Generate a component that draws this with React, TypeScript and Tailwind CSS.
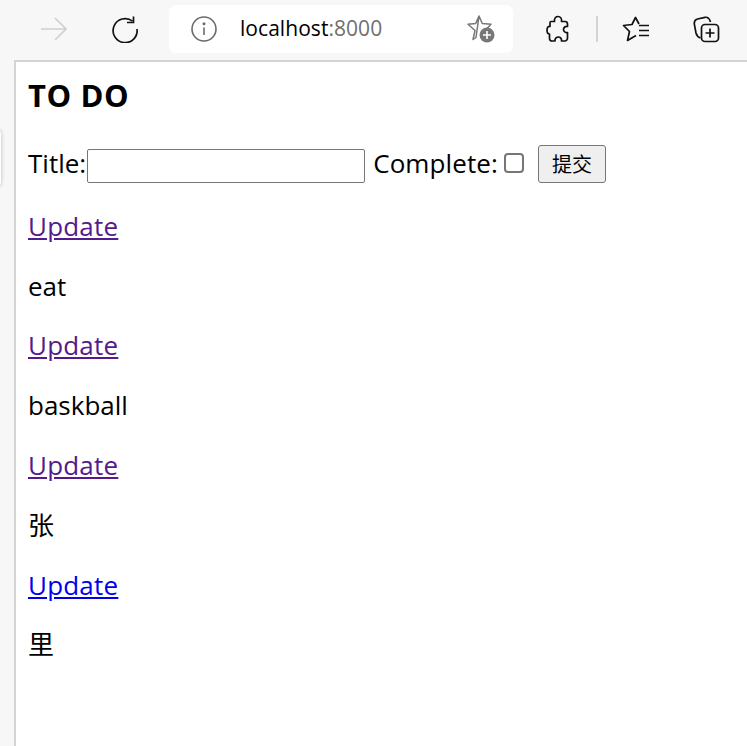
import React from "react";

const F = "font-['Open_Sans','Noto_Sans_CJK_SC',sans-serif]";

function Back() {
  return (
    <svg width="27" height="26" viewBox="0 0 27 26" fill="none" stroke="#cfcfcf" strokeWidth="1.6">
      <path d="M1 13H26M15 2L26 13L15 24" />
    </svg>
  );
}
function Reload() {
  return (
    <svg width="28" height="28" viewBox="0 0 28 28" fill="none" stroke="#111" strokeWidth="1.7">
      <path d="M21.5 6.2A12 12 0 1 0 26 14" />
      <path d="M22.5 1.5V7.5H16" />
    </svg>
  );
}
function Info() {
  return (
    <svg width="26" height="26" viewBox="0 0 26 26" fill="none" stroke="#6b6b6b" strokeWidth="1.6">
      <circle cx="13" cy="13" r="12" />
      <path d="M13 11.5V19" />
      <circle cx="13" cy="7.8" r="0.7" fill="#6b6b6b" />
    </svg>
  );
}
function StarAdd() {
  return (
    <svg width="30" height="30" viewBox="0 0 30 30" fill="none">
      <path d="M13 2L16.3 9.5L25 10.3L20.5 15M10 23.5L7 25.5L9 16.5L2 10.3L9.7 9.5L13 2Z" stroke="#777" strokeWidth="1.5" strokeLinejoin="round" />
      <circle cx="21" cy="21" r="7.5" fill="#777" />
      <path d="M21 17V25M17 21H25" stroke="#fff" strokeWidth="1.6" />
    </svg>
  );
}
function Puzzle() {
  return (
    <svg width="24" height="28" viewBox="0 0 24 28" fill="none" stroke="#111" strokeWidth="1.7" strokeLinejoin="round">
      <path d="M5 6.500H8.500C8 3 10 1.500 12 1.500C14.500 1.500 16 3.500 15.500 6.500H19C21 6.500 21.500 8 21.500 9V11.500C19 11 17.500 13 17.500 14.500C17.500 16.500 19.500 18 21.500 17.500V23C21.500 25 20 26 19 26H15.500C16 23.500 14 22 12.500 22C10.500 22 8.500 23.500 9 26H6C4.500 26 3.500 25 3.500 23.500V19C1.500 19 1 17 1 15C1 13 2 11 4 11.500V8C4 7 4.500 6.500 5 6.500Z" />
    </svg>
  );
}
function Favorites() {
  return (
    <svg width="28" height="26" viewBox="0 0 28 26" fill="none" stroke="#111" strokeWidth="1.7" strokeLinejoin="round">
      <path d="M17 8L13.500 1.500L10 8.500L1.500 9.500L7.500 15.500L5.500 24.500L14 19.500" />
      <path d="M17 9.500H27M17 14.500H27M17 19.500H27" />
    </svg>
  );
}
function Collections() {
  return (
    <svg width="27" height="27" viewBox="0 0 27 27" fill="none" stroke="#111" strokeWidth="1.7">
      <path d="M7.500 22C4.500 21 3.500 19 3 17L1.300 8C1 5 2.500 3.500 4.500 3L12 1.300C14.500 1 16.500 2.500 17.500 6" />
      <rect x="8.500" y="8.500" width="17" height="17" rx="3.500" />
      <path d="M17 12.500V21.500M12.500 17H21.500" />
    </svg>
  );
}

function Item({ text, visited }: { text: string; visited: boolean }) {
  return (
    <>
      <a href="#" className={`block h-[36px] mt-[23.8px] leading-[36px] underline tracking-[0.2px] ${visited ? "text-[#551a8b]" : "text-[#0000ee]"}`}>
        Update
      </a>
      <p className="h-[36px] mt-[23.8px] leading-[36px] text-black">{text}</p>
    </>
  );
}

export default function App() {
  return (
    <div className={`${F} w-[747px] h-[746px] overflow-hidden bg-[#f7f7f7] flex flex-col`}>
      <header className="h-[60px] shrink-0 flex items-start pt-[5px]">
        <div className="w-[169px] h-[48px] flex items-center shrink-0 pl-[40px]">
          <Back />
          <div className="ml-[44px] flex"><Reload /></div>
        </div>
        <div className="w-[344px] h-[48px] bg-white rounded-[7px] flex items-center pl-[22px] pr-[17px] shrink-0">
          <Info />
          <span className="ml-[23px] text-[21px] tracking-[0.05px] text-black">
            localhost<span className="text-[#6f6f6f]">:8000</span>
          </span>
          <span className="ml-auto flex"><StarAdd /></span>
        </div>
        <div className="flex-1 h-[48px] flex items-center pl-[33px]">
          <Puzzle />
          <div className="ml-[26px] w-[2px] h-[26px] bg-[#d4d4d4]" />
          <div className="ml-[24px] flex"><Favorites /></div>
          <div className="ml-[43px] flex"><Collections /></div>
        </div>
      </header>
      <div className="flex-1 flex min-h-0">
        <div className="w-[14px] shrink-0 relative">
          <div className="absolute left-[-10px] top-[70px] w-[11px] h-[56px] bg-white rounded-[4px] shadow-[0_0_4px_rgba(0,0,0,0.25)]" />
        </div>
        <main className="flex-1 bg-white border-l-2 border-t-2 border-[#d4d4d4] pl-[12px] text-[26px]">
          <h1 className="font-bold text-[31px] tracking-[0.6px] leading-[40px] mt-[13px] text-black">TO DO</h1>
          <form className="mt-[28px] h-[40px] flex items-center text-black" onSubmit={(e) => e.preventDefault()}>
            <label>Title:</label>
            <input type="text" className="w-[278px] h-[34px] bg-white border border-[#767676] rounded-[2px] ml-[1px] mt-[5px]" />
            <label className="ml-[8px] tracking-[0.1px]">Complete:</label>
            <input type="checkbox" className="w-[20px] h-[20px] ml-[6px] appearance-none bg-white border-2 border-[#767676] rounded-[4px]" />
            <button className="ml-[14px] w-[68px] h-[38px] bg-[#efefef] border border-[#767676] rounded-[3px] text-[20px] leading-none mt-[1px] font-['Noto_Sans_CJK_SC',sans-serif]">
              提交
            </button>
          </form>
          <div className="pt-[1px]">
            <Item text="eat" visited />
            <Item text="baskball" visited />
            <Item text="张" visited />
            <Item text="里" visited={false} />
          </div>
        </main>
      </div>
    </div>
  );
}
